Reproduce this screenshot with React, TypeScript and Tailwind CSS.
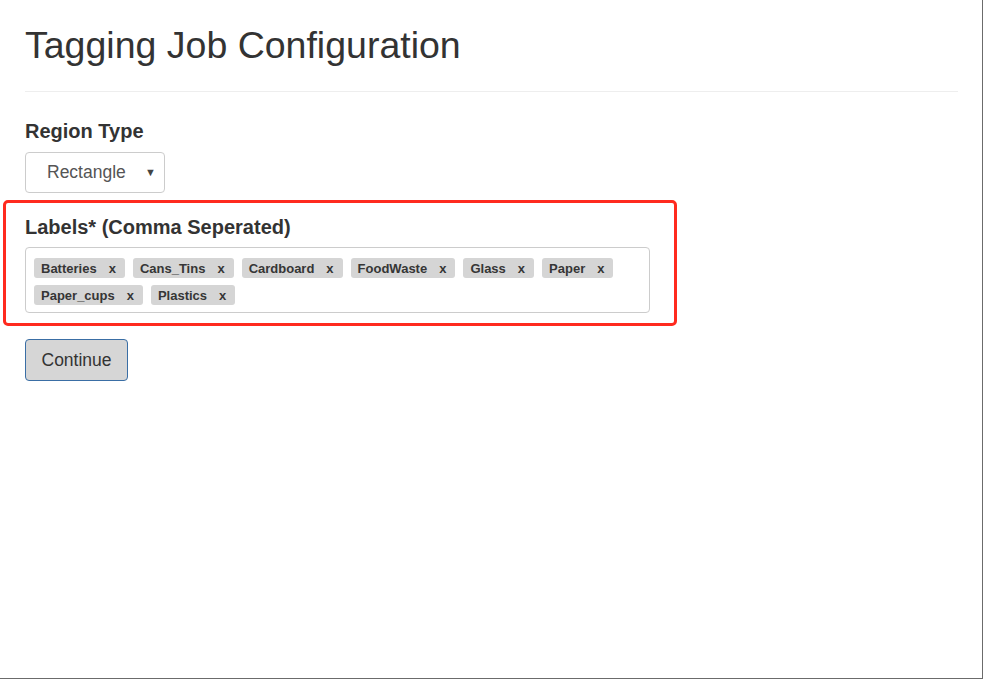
const labels = [
  "Batteries",
  "Cans_Tins",
  "Cardboard",
  "FoodWaste",
  "Glass",
  "Paper",
  "Paper_cups",
  "Plastics",
];

function Tag({ text }: { text: string }) {
  return (
    <span className="flex h-[20px] items-center rounded-[3px] bg-[#d5d5d5] pl-[7px] pr-[9px] text-[13px] font-bold leading-none text-[#363636]">
      {text}
      <span className="ml-[12px]">x</span>
    </span>
  );
}

export default function App() {
  return (
    <div className="h-[679px] w-[983px] border-b border-r border-[#6b6b6b] bg-white font-['Liberation_Sans',Arial,sans-serif] text-[#333]">
      <div className="pl-[25px] pr-[24px]">
        <div className="border-b border-[#eee] pb-[25px] pt-[25px]">
          <h1 className="text-[37.5px] leading-[41px]">Tagging Job Configuration</h1>
        </div>

        <label className="mt-[28px] block text-[20px] font-bold leading-[22px]">Region Type</label>
        <div className="mt-[10px] flex h-[41px] w-[140px] items-center justify-between rounded-[4px] border border-[#ccc] pl-[21px] pr-[8px] text-[17.5px] text-[#555]">
          <span>Rectangle</span>
          <span className="text-[11px] text-[#444]">▼</span>
        </div>

        <div className="-ml-[22px] mt-[7px] w-[674px] rounded-[5px] border-[3px] border-[#ff2a1f] pb-[10px] pl-[19px] pr-[24px] pt-[13px]">
          <label className="block text-[20px] font-bold leading-[22px]">Labels* (Comma Seperated)</label>
          <div className="mt-[9px] flex h-[66px] flex-wrap content-start gap-x-[8px] gap-y-[7px] rounded-[4px] border border-[#ccc] pb-[7px] pl-[8px] pr-[8px] pt-[10px]">
            {labels.map((l) => (
              <Tag key={l} text={l} />
            ))}
          </div>
        </div>

        <button className="mt-[13px] h-[42px] rounded-[4px] border border-[#3a6ea5] bg-[#d6d6d6] px-[15.5px] text-[17.5px] text-[#333]">
          Continue
        </button>
      </div>
    </div>
  );
}
